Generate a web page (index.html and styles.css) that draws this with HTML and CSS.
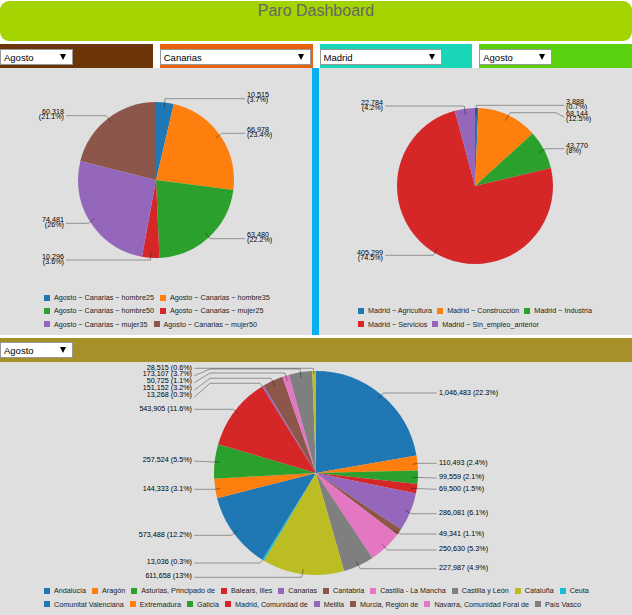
FILE: index.html
```html
<!DOCTYPE html>
<html lang="en">
<head>
    <meta charset="UTF-8">
    <title>Paro Dashboard</title>
    <link rel="stylesheet" href="styles.css">
</head>
<body>
    <header class="title-bar">
        <h1>Paro Dashboard</h1>
    </header>

    <div class="filter-row">
        <div class="filter brown">
            <div class="picker w-month"><select><option>Agosto</option></select><i class="arrow"></i></div>
        </div>
        <div class="filter orange">
            <div class="picker w-full"><select><option>Canarias</option></select><i class="arrow"></i></div>
        </div>
        <div class="filter teal">
            <div class="picker w-city"><select><option>Madrid</option></select><i class="arrow"></i></div>
        </div>
        <div class="filter green">
            <div class="picker w-month"><select><option>Agosto</option></select><i class="arrow"></i></div>
        </div>
    </div>

    <div class="chart-row">
        <section class="panel">
            <svg class="chart" width="312" height="223" viewBox="0 68 312 223">
                <g transform="rotate(-90 156 180)">
                    <circle class="slice c0" cx="156" cy="180" r="39" pathLength="100" stroke-dasharray="3.68 100" stroke-dashoffset="0"/>
                    <circle class="slice c1" cx="156" cy="180" r="39" pathLength="100" stroke-dasharray="23.41 100" stroke-dashoffset="-3.68"/>
                    <circle class="slice c2" cx="156" cy="180" r="39" pathLength="100" stroke-dasharray="22.19 100" stroke-dashoffset="-27.09"/>
                    <circle class="slice c3" cx="156" cy="180" r="39" pathLength="100" stroke-dasharray="3.6 100" stroke-dashoffset="-49.28"/>
                    <circle class="slice c4" cx="156" cy="180" r="39" pathLength="100" stroke-dasharray="26.04 100" stroke-dashoffset="-52.88"/>
                    <circle class="slice c5" cx="156" cy="180" r="39" pathLength="100" stroke-dasharray="21.08 100" stroke-dashoffset="-78.92"/>
                </g>
                <polyline class="leader" points="164.3,107.3 165,98.7 245,98.7"/>
                <polyline class="leader" points="216,138 221.7,133.3 245,133.3"/>
                <polyline class="leader" points="205,232.7 210,238.7 245,238.7"/>
                <polyline class="leader" points="150.7,252.3 150.7,260 66,260"/>
                <polyline class="leader" points="95,218.3 88.3,223.3 66,223.3"/>
                <polyline class="leader" points="111,121.7 106,115.7 66,115.7"/>
                <text class="label" y="97"><tspan x="247">10,515</tspan><tspan x="247" dy="5">(3.7%)</tspan></text>
                <text class="label" y="132"><tspan x="247">66,978</tspan><tspan x="247" dy="5">(23.4%)</tspan></text>
                <text class="label" y="237"><tspan x="247">63,480</tspan><tspan x="247" dy="5">(22.2%)</tspan></text>
                <text class="label end" y="259"><tspan x="64">10,296</tspan><tspan x="64" dy="5">(3.6%)</tspan></text>
                <text class="label end" y="222"><tspan x="64">74,481</tspan><tspan x="64" dy="5">(26%)</tspan></text>
                <text class="label end" y="114"><tspan x="64">60,318</tspan><tspan x="64" dy="5">(21.1%)</tspan></text>
            </svg>
            <ul class="legend legend-canarias">
                <li><i class="c0"></i>Agosto ~ Canarias ~ hombre25</li>
                <li><i class="c1"></i>Agosto ~ Canarias ~ hombre35</li>
                <li><i class="c2"></i>Agosto ~ Canarias ~ hombre50</li>
                <li><i class="c3"></i>Agosto ~ Canarias ~ mujer25</li>
                <li><i class="c4"></i>Agosto ~ Canarias ~ mujer35</li>
                <li><i class="c5"></i>Agosto ~ Canarias ~ mujer50</li>
            </ul>
        </section>

        <section class="panel">
            <svg class="chart" width="313" height="223" viewBox="319 68 313 223">
                <g transform="rotate(-90 475 186)">
                    <circle class="slice c0" cx="475" cy="186" r="39" pathLength="100" stroke-dasharray="0.71 100" stroke-dashoffset="0"/>
                    <circle class="slice c1" cx="475" cy="186" r="39" pathLength="100" stroke-dasharray="12.53 100" stroke-dashoffset="-0.71"/>
                    <circle class="slice c2" cx="475" cy="186" r="39" pathLength="100" stroke-dasharray="8.05 100" stroke-dashoffset="-13.24"/>
                    <circle class="slice c3" cx="475" cy="186" r="39" pathLength="100" stroke-dasharray="74.52 100" stroke-dashoffset="-21.29"/>
                    <circle class="slice c4" cx="475" cy="186" r="39" pathLength="100" stroke-dasharray="4.19 100" stroke-dashoffset="-95.81"/>
                </g>
                <polyline class="leader" points="476,115 476.3,105.3 564.3,105.3"/>
                <polyline class="leader" points="505.3,120.7 510,112.7 556,112.7 564.3,117.3"/>
                <polyline class="leader" points="538.7,152.7 546,148.7 564.3,148.7"/>
                <polyline class="leader" points="437.7,248.3 433.3,255.3 385.3,255.3"/>
                <polyline class="leader" points="465.3,115 464.3,106 385.3,106"/>
                <text class="label" y="103.5"><tspan x="566">3,888</tspan><tspan x="566" dy="5">(0.7%)</tspan></text>
                <text class="label" y="115.5"><tspan x="566">68,144</tspan><tspan x="566" dy="5">(12.5%)</tspan></text>
                <text class="label" y="148"><tspan x="566">43,770</tspan><tspan x="566" dy="5">(8%)</tspan></text>
                <text class="label end" y="255"><tspan x="383">405,299</tspan><tspan x="383" dy="5">(74.5%)</tspan></text>
                <text class="label end" y="105"><tspan x="383">22,784</tspan><tspan x="383" dy="5">(4.2%)</tspan></text>
            </svg>
            <ul class="legend legend-madrid">
                <li><i class="c0"></i>Madrid ~ Agricultura</li>
                <li><i class="c1"></i>Madrid ~ Construcción</li>
                <li><i class="c2"></i>Madrid ~ Industria</li>
                <li><i class="c3"></i>Madrid ~ Servicios</li>
                <li><i class="c4"></i>Madrid ~ Sin_empleo_anterior</li>
            </ul>
        </section>
    </div>

    <div class="filter olive bottom-filter">
        <div class="picker w-month"><select><option>Agosto</option></select><i class="arrow"></i></div>
    </div>

    <section class="panel wide">
        <svg class="chart" width="632" height="222" viewBox="0 362 632 222">
            <g transform="rotate(-90 316 473)">
                <circle class="slice-lg c0" cx="316" cy="473" r="51" pathLength="100" stroke-dasharray="22.26 100" stroke-dashoffset="0"/>
                <circle class="slice-lg c1" cx="316" cy="473" r="51" pathLength="100" stroke-dasharray="2.35 100" stroke-dashoffset="-22.26"/>
                <circle class="slice-lg c2" cx="316" cy="473" r="51" pathLength="100" stroke-dasharray="2.12 100" stroke-dashoffset="-24.61"/>
                <circle class="slice-lg c3" cx="316" cy="473" r="51" pathLength="100" stroke-dasharray="1.48 100" stroke-dashoffset="-26.73"/>
                <circle class="slice-lg c4" cx="316" cy="473" r="51" pathLength="100" stroke-dasharray="6.09 100" stroke-dashoffset="-28.21"/>
                <circle class="slice-lg c5" cx="316" cy="473" r="51" pathLength="100" stroke-dasharray="1.05 100" stroke-dashoffset="-34.3"/>
                <circle class="slice-lg c6" cx="316" cy="473" r="51" pathLength="100" stroke-dasharray="5.33 100" stroke-dashoffset="-35.35"/>
                <circle class="slice-lg c7" cx="316" cy="473" r="51" pathLength="100" stroke-dasharray="4.85 100" stroke-dashoffset="-40.68"/>
                <circle class="slice-lg c8" cx="316" cy="473" r="51" pathLength="100" stroke-dasharray="13.01 100" stroke-dashoffset="-45.53"/>
                <circle class="slice-lg c9" cx="316" cy="473" r="51" pathLength="100" stroke-dasharray="0.28 100" stroke-dashoffset="-58.54"/>
                <circle class="slice-lg c0" cx="316" cy="473" r="51" pathLength="100" stroke-dasharray="12.2 100" stroke-dashoffset="-58.82"/>
                <circle class="slice-lg c1" cx="316" cy="473" r="51" pathLength="100" stroke-dasharray="3.07 100" stroke-dashoffset="-71.02"/>
                <circle class="slice-lg c2" cx="316" cy="473" r="51" pathLength="100" stroke-dasharray="5.48 100" stroke-dashoffset="-74.09"/>
                <circle class="slice-lg c3" cx="316" cy="473" r="51" pathLength="100" stroke-dasharray="11.57 100" stroke-dashoffset="-79.57"/>
                <circle class="slice-lg c4" cx="316" cy="473" r="51" pathLength="100" stroke-dasharray="0.28 100" stroke-dashoffset="-91.14"/>
                <circle class="slice-lg c5" cx="316" cy="473" r="51" pathLength="100" stroke-dasharray="3.22 100" stroke-dashoffset="-91.42"/>
                <circle class="slice-lg c6" cx="316" cy="473" r="51" pathLength="100" stroke-dasharray="1.08 100" stroke-dashoffset="-94.64"/>
                <circle class="slice-lg c7" cx="316" cy="473" r="51" pathLength="100" stroke-dasharray="3.68 100" stroke-dashoffset="-95.72"/>
                <circle class="slice-lg c8" cx="316" cy="473" r="51" pathLength="100" stroke-dasharray="0.61 100" stroke-dashoffset="-99.4"/>
            </g>
            <polyline class="leader" points="194.3,368.3 210,368.3 313.3,368.3 314,374"/>
            <polyline class="leader" points="194.3,375.7 210,369 300,369 301,377.7"/>
            <polyline class="leader" points="194.3,382.7 210,373 285,373 287.3,380.7"/>
            <polyline class="leader" points="194.3,390 210,378.3 271,378.3 275,385.7"/>
            <polyline class="leader" points="194.3,397 210,383.3 260,383.3 263.3,387.3"/>
            <polyline class="leader" points="194.3,409.3 233.3,409.3 238.7,414.3"/>
            <polyline class="leader" points="194.3,461 219.3,462.3"/>
            <polyline class="leader" points="194.3,489.3 215,489.3 220,488.3"/>
            <polyline class="leader" points="194.3,535.3 231.7,535.3 237.7,530.3"/>
            <polyline class="leader" points="194.3,563 260,563 263.3,559.3"/>
            <polyline class="leader" points="194.3,577.3 301.7,577.3 303.3,569"/>
            <polyline class="leader" points="378.3,399 383.3,393 436.7,393"/>
            <polyline class="leader" points="412.3,464.3 418.3,463.3 436.7,463.3"/>
            <polyline class="leader" points="411.7,477.3 436.7,478"/>
            <polyline class="leader" points="411,488.3 436.7,489.3"/>
            <polyline class="leader" points="405,510 411,513.7 436.7,513.7"/>
            <polyline class="leader" points="394.3,531 400.7,534 436.7,534"/>
            <polyline class="leader" points="381.7,544 387.3,550 436.7,550"/>
            <polyline class="leader" points="356,561 360,568.7 436.7,568.7"/>
            <text class="label end" x="192" y="369.5">28,515 (0.6%)</text>
            <text class="label end" x="192" y="376">173,107 (3.7%)</text>
            <text class="label end" x="192" y="383">50,725 (1.1%)</text>
            <text class="label end" x="192" y="390">151,152 (3.2%)</text>
            <text class="label end" x="192" y="397">13,268 (0.3%)</text>
            <text class="label end" x="192" y="410.5">543,905 (11.6%)</text>
            <text class="label end" x="192" y="462">257,524 (5.5%)</text>
            <text class="label end" x="192" y="490.5">144,333 (3.1%)</text>
            <text class="label end" x="192" y="536.5">573,488 (12.2%)</text>
            <text class="label end" x="192" y="563.5">13,036 (0.3%)</text>
            <text class="label end" x="192" y="578">611,658 (13%)</text>
            <text class="label" x="439" y="394.5">1,046,483 (22.3%)</text>
            <text class="label" x="439" y="464.5">110,493 (2.4%)</text>
            <text class="label" x="439" y="478.5">99,559 (2.1%)</text>
            <text class="label" x="439" y="490.5">69,500 (1.5%)</text>
            <text class="label" x="439" y="514.5">286,081 (6.1%)</text>
            <text class="label" x="439" y="535.5">49,341 (1.1%)</text>
            <text class="label" x="439" y="550.5">250,630 (5.3%)</text>
            <text class="label" x="439" y="569.5">227,987 (4.9%)</text>
        </svg>
        <ul class="legend legend-spain">
            <li><i class="c0"></i>Andalucía</li>
            <li><i class="c1"></i>Aragón</li>
            <li><i class="c2"></i>Asturias, Principado de</li>
            <li><i class="c3"></i>Balears, Illes</li>
            <li><i class="c4"></i>Canarias</li>
            <li><i class="c5"></i>Cantabria</li>
            <li><i class="c6"></i>Castilla - La Mancha</li>
            <li><i class="c7"></i>Castilla y León</li>
            <li><i class="c8"></i>Cataluña</li>
            <li><i class="c9"></i>Ceuta</li>
            <li><i class="c0"></i>Comunitat Valenciana</li>
            <li><i class="c1"></i>Extremadura</li>
            <li><i class="c2"></i>Galicia</li>
            <li><i class="c3"></i>Madrid, Comunidad de</li>
            <li><i class="c4"></i>Melilla</li>
            <li><i class="c5"></i>Murcia, Región de</li>
            <li><i class="c6"></i>Navarra, Comunidad Foral de</li>
            <li><i class="c7"></i>País Vasco</li>
        </ul>
    </section>
</body>
</html>
```

FILE: styles.css
```css
body {
    font-family: "Liberation Sans", Arial, sans-serif;
    margin: 0;
    background-color: #fff;
    overflow: hidden;
}

.title-bar {
    height: 40px;
    margin-top: 1px;
    background-color: #a3d300;
    border-radius: 9px;
    text-align: center;
}

h1 {
    margin: 0;
    font-size: 16px;
    font-weight: normal;
    line-height: 19px;
    color: #666;
}

.filter-row {
    display: grid;
    grid-template-columns: repeat(4, 1fr);
    gap: 7px;
    margin-top: 3px;
}

.filter {
    height: 24px;
    padding-top: 5px;
    box-sizing: border-box;
}

.brown { background-color: #6b3508; }
.orange { background-color: #e8620f; }
.teal { background-color: #19d6b8; }
.green { background-color: #5ad10f; }
.olive { background-color: #a59127; }

.bottom-filter {
    margin-top: 3px;
    padding-top: 4px;
}

.picker {
    position: relative;
    height: 16px;
}

.w-month { width: 73px; }
.w-city { width: 122px; }
.w-full { width: 151px; }

.picker select {
    appearance: none;
    display: block;
    width: 100%;
    height: 16px;
    margin: 0;
    padding: 0 0 0 3px;
    border: 1px solid #999;
    border-radius: 0;
    background-color: #fff;
    font-family: "Liberation Sans", Arial, sans-serif;
    font-size: 9.5px;
    color: #000;
}

.arrow {
    position: absolute;
    top: 5px;
    right: 7px;
    border-left: 3.5px solid transparent;
    border-right: 3.5px solid transparent;
    border-top: 6.5px solid #000;
}

.chart-row {
    display: grid;
    grid-template-columns: 312px 313px;
    justify-content: space-between;
    height: 267px;
    background-color: #09aef0;
}

.panel {
    display: flex;
    flex-direction: column;
    background-color: #dfdfdf;
}

.wide {
    height: 253px;
}

.chart {
    display: block;
    flex: none;
}

.slice,
.slice-lg {
    fill: none;
}

.slice { stroke-width: 78; }
.slice-lg { stroke-width: 102; }

.leader {
    fill: none;
    stroke: #000;
    stroke-opacity: 0.35;
    stroke-width: 1;
}

.label {
    font-size: 7.2px;
    fill: #000;
}

.end {
    text-anchor: end;
}

.legend {
    display: flex;
    flex-wrap: wrap;
    column-gap: 6px;
    margin: auto 0 0;
    padding: 0 0 4px 44px;
    list-style: none;
    font-size: 7.2px;
    line-height: 13.3px;
    color: #222;
}

.legend li {
    display: flex;
    align-items: center;
    white-space: nowrap;
}

.legend i {
    width: 6px;
    height: 6px;
    margin-right: 4px;
}

.legend-canarias { width: 234px; }
.legend-madrid { width: 240px; padding-left: 39px; column-gap: 5px; }
.legend-spain { width: 552px; }

.c0 { stroke: #1f77b4; background-color: #1f77b4; }
.c1 { stroke: #ff7f0e; background-color: #ff7f0e; }
.c2 { stroke: #2ca02c; background-color: #2ca02c; }
.c3 { stroke: #d62728; background-color: #d62728; }
.c4 { stroke: #9467bd; background-color: #9467bd; }
.c5 { stroke: #8c564b; background-color: #8c564b; }
.c6 { stroke: #e377c2; background-color: #e377c2; }
.c7 { stroke: #7f7f7f; background-color: #7f7f7f; }
.c8 { stroke: #bcbd22; background-color: #bcbd22; }
.c9 { stroke: #17becf; background-color: #17becf; }
```
